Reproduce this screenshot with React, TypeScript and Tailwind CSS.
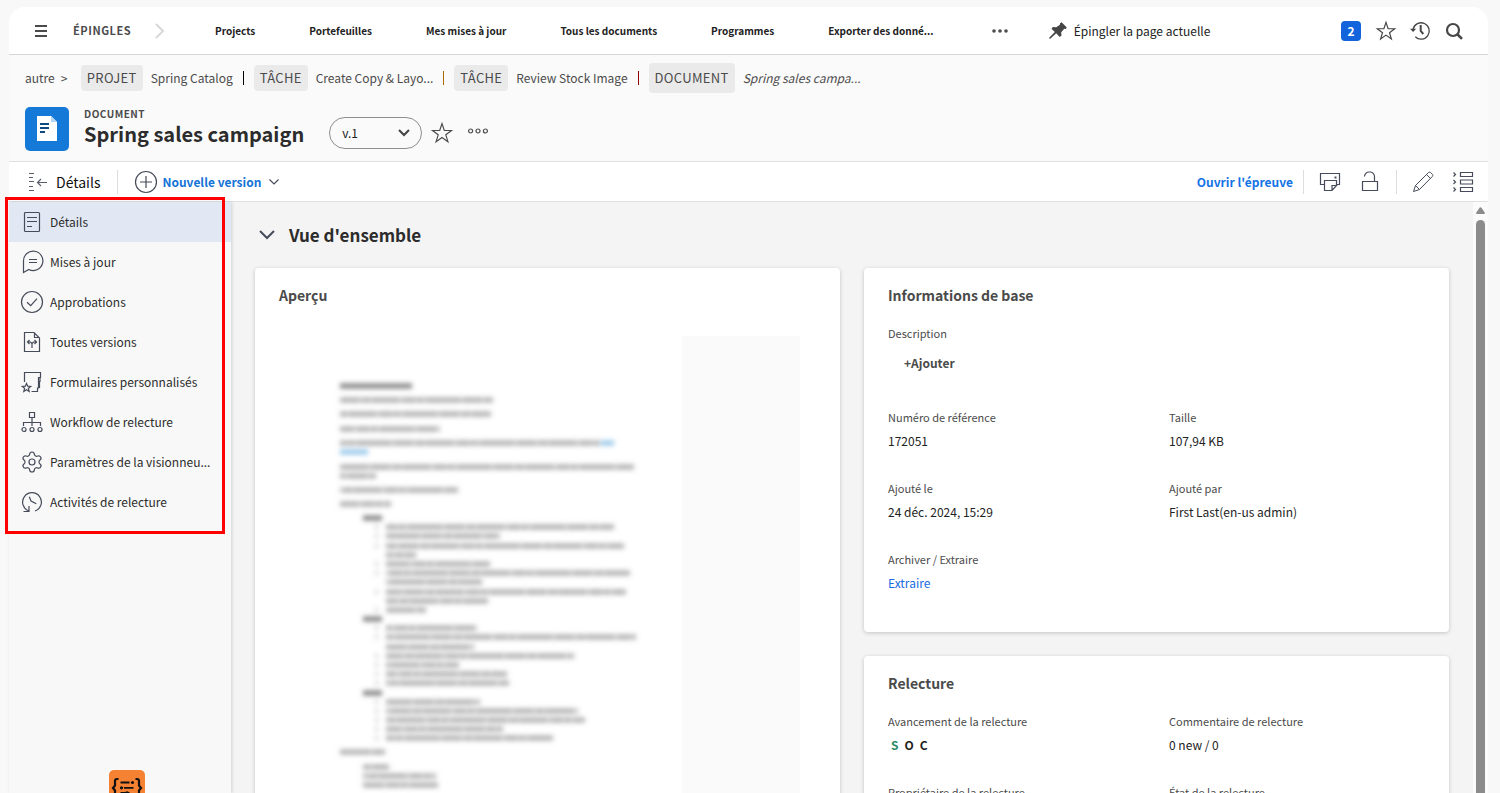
import React from "react";
import { Settings } from "lucide-react";

type IconProps = { children: React.ReactNode; className?: string };

function Icon({ children, className = "size-6" }: IconProps) {
  return (
    <svg
      viewBox="0 0 24 24"
      fill="none"
      stroke="currentColor"
      strokeWidth="1.2"
      aria-hidden="true"
      className={`shrink-0 ${className}`}
    >
      {children}
    </svg>
  );
}

const STAR = "M12 2.6l2.3 6.8 7.2.1-5.7 4.3 2.1 6.9-5.9-4.2-5.9 4.2 2.1-6.9L2.500 9.500l7.200-.1z";

const pins = [
  "Projects",
  "Portefeuilles",
  "Mes mises à jour",
  "Tous les documents",
  "Programmes",
  "Exporter des donné...",
];

function TopBar() {
  return (
    <header className="flex h-12 shrink-0 items-center rounded-t-2xl border-b border-[#d5d5d5] bg-white pl-5 pr-[22px]">
      <button aria-label="Menu principal" className="text-[#4b4b4b]">
        <Icon>
          <path d="M6 7h12M6 12h12M6 17h12" strokeWidth="2" />
        </Icon>
      </button>
      <span className="ml-5 w-16 whitespace-nowrap text-[11px] font-bold tracking-wider text-[#4b4b4b]">ÉPINGLES</span>
      <svg viewBox="0 0 10 16" className="ml-[18px] h-4 w-[10px]" fill="none" stroke="#d8d8d8" strokeWidth="2" aria-hidden="true">
        <path d="M1 1l7 7-7 7" />
      </svg>
      <nav className="ml-[50px] flex gap-[54px]">
        {pins.map((p) => (
          <a key={p} href="#" className="whitespace-nowrap text-[10px] font-bold text-[#222]">
            {p}
          </a>
        ))}
      </nav>
      <button aria-label="Plus d’épingles" className="ml-[58px] text-[#4b4b4b]">
        <svg viewBox="0 0 16 4" className="h-1 w-4" fill="currentColor" aria-hidden="true">
          <circle cx="2" cy="2" r="1.800" />
          <circle cx="8" cy="2" r="1.800" />
          <circle cx="14" cy="2" r="1.800" />
        </svg>
      </button>
      <button className="ml-10 flex items-center gap-1.5 whitespace-nowrap text-xs text-[#222]">
        <svg viewBox="0 0 20 20" className="size-5" fill="#464646" aria-hidden="true">
          <path d="M13.600 1.200l5.200 5.200-1 1.500-1.500-.1-3.100 3.400.3 3.200-1.800 1.500-3.500-3.600-5.900 5.400-1-.1-.1-.8L6.800 11 3.500 7.700l1.300-1.600 3.400.2L11.900 3.700l.2-1.500z" />
        </svg>
        Épingler la page actuelle
      </button>
      <div className="ml-auto flex items-center text-[#464646]">
        <button className="size-5 rounded bg-[#1164dc] text-xs font-bold leading-5 text-white">2</button>
        <button aria-label="Favoris" className="ml-[14px]">
          <Icon className="size-[22px]"><path d={STAR} strokeWidth="1.300" /></Icon>
        </button>
        <button aria-label="Récents" className="ml-[11px]">
          <Icon className="size-6">
            <path d="M5.100 10A8.200 8.200 0 1 1 7.300 17.800" strokeWidth="1.300" />
            <path d="M2 9.700h6.200l-3.100 3.200z" fill="currentColor" stroke="none" />
            <path d="M12.700 6v6l2.600 3" strokeWidth="2" />
          </Icon>
        </button>
        <button aria-label="Rechercher" className="ml-[10px]">
          <Icon className="size-6">
            <circle cx="11" cy="11" r="6" strokeWidth="2.200" />
            <path d="M15.300 15.300l4.700 4.600" strokeWidth="2.600" />
          </Icon>
        </button>
      </div>
    </header>
  );
}

const crumbs = [
  { kind: "PROJET", name: "Spring Catalog", sep: "border-black" },
  { kind: "TÂCHE", name: "Create Copy & Layo...", sep: "border-[#a86a00]" },
  { kind: "TÂCHE", name: "Review Stock Image", sep: "border-[#900000]" },
];

function PageHeader() {
  return (
    <section className="shrink-0 border-b border-[#e1e1e1] bg-[#fafafa] pb-[10px] pl-4 pt-2 text-[#4b4b4b]">
      <nav aria-label="Fil d’Ariane" className="flex h-[30px] items-center whitespace-nowrap text-xs">
        <a href="#">autre</a>
        <span className="ml-1.5 w-[14px]">&gt;</span>
        {crumbs.map((c) => (
          <div key={c.name} className="flex items-center">
            <span className="ml-1.5 mr-2 rounded bg-[#eaeaea] px-1.5 text-[13px] leading-[26px] tracking-wide">{c.kind}</span>
            <a href="#">{c.name}</a>
            <span className={`ml-[10px] mr-1 h-[14px] border-l ${c.sep}`} />
          </div>
        ))}
        <span className="ml-1.5 mr-2 rounded bg-[#eaeaea] px-1.5 text-[13px] leading-[30px] tracking-wide">DOCUMENT</span>
        <a href="#" className="italic">Spring sales campa...</a>
      </nav>
      <div className="mt-[14px] flex items-start">
        <svg viewBox="0 0 44 44" className="size-11" aria-hidden="true">
          <rect width="44" height="44" rx="5" fill="#1579d8" />
          <path d="M12 9h14l6 6v19H12z" fill="#fff" />
          <path d="M26 9l6 6h-6z" fill="#b5d7f5" />
          <path d="M15 17h9M15 21h9M15 25h5" stroke="#0c4a80" strokeWidth="2" />
        </svg>
        <div className="ml-[15px]">
          <p className="text-[10px] font-bold leading-[14px] tracking-wider">DOCUMENT</p>
          <h1 className="whitespace-nowrap text-xl font-bold leading-[26px] text-[#2c2c2c]">Spring sales campaign</h1>
        </div>
        <div className="relative ml-[25px] mt-[10px]">
          <select
            aria-label="Version"
            className="h-8 w-[93px] appearance-none rounded-full border border-[#8e8e8e] bg-transparent pl-3 text-xs text-[#222]"
          >
            <option>v.1</option>
          </select>
          <svg viewBox="0 0 12 8" className="pointer-events-none absolute right-3 top-3 h-2 w-3" fill="none" stroke="#444" strokeWidth="2" aria-hidden="true">
            <path d="M1 1l5 5 5-5" />
          </svg>
        </div>
        <button aria-label="Ajouter aux favoris" className="ml-2 mt-[14px]">
          <Icon><path d={STAR} /></Icon>
        </button>
        <button aria-label="Autres actions" className="ml-[14px] mt-[21px]">
          <svg viewBox="0 0 20 6" className="h-1.5 w-5" fill="none" stroke="currentColor" strokeWidth="1.200" aria-hidden="true">
            <circle cx="2.600" cy="3" r="2" />
            <circle cx="10" cy="3" r="2" />
            <circle cx="17.400" cy="3" r="2" />
          </svg>
        </button>
      </div>
    </section>
  );
}

function Toolbar() {
  return (
    <div className="flex h-10 shrink-0 items-center whitespace-nowrap border-b border-[#e1e1e1] bg-white pl-4 pr-[13px] text-[#464b59]">
      <button className="flex items-center gap-[7px] text-sm text-[#111]">
        <Icon className="size-6 text-[#5b5f6b]">
          <path d="M4 3.500h5M4 7.500h4M4 11.500h5M4 16.500h4M4 20.500h5" />
          <path d="M12.500 12.500h9.500M16 9l-3.500 3.500 3.500 3.500" />
        </Icon>
        Détails
      </button>
      <span className="ml-[17px] h-6 border-l border-[#dedede]" />
      <button className="ml-4 flex items-center text-xs font-bold text-[#1473d6]">
        <Icon className="size-6 text-[#464b59]">
          <circle cx="12" cy="12" r="10.500" />
          <path d="M12 6v12M6 12h12" />
        </Icon>
        <span className="ml-1 mr-2">Nouvelle version</span>
        <svg viewBox="0 0 10 6" className="h-1.5 w-[10px] text-[#464b59]" fill="none" stroke="currentColor" strokeWidth="1.200" aria-hidden="true">
          <path d="M.5.5L5 5 9.500.5" />
        </svg>
      </button>
      <div className="ml-auto flex items-center">
        <a href="#" className="text-xs font-bold text-[#1473e6]">Ouvrir l'épreuve</a>
        <span className="ml-[10px] h-6 border-l border-[#dedede]" />
        <button aria-label="Imprimer" className="ml-[14px]">
          <Icon>
            <path d="M6.500 14.500h-4v-11h19v11h-3" />
            <path d="M18.500 15.500v-5h-12v10h7.500l4.500-5h-4.500v5" />
            <path d="M17.500 6.500v2" strokeWidth="2" />
          </Icon>
        </button>
        <button aria-label="Déverrouiller" className="ml-4">
          <Icon>
            <path d="M4.500 11.500h15v9h-15zM16.500 11.500v-5a4.500 4.500 0 0 0-4.500-4.500h-1a4.500 4.500 0 0 0-4.500 4.500" />
          </Icon>
        </button>
        <span className="ml-[14px] h-6 border-l border-[#dedede]" />
        <button aria-label="Modifier" className="ml-[14px]">
          <Icon>
            <path strokeWidth="1" d="M2.500 21.500l2-6L17.500 2.500c.8-.6 1.700-.4 2.300.2l1.500 1.500c.6.6.8 1.500.1 2.200L8.500 19.500zM4.500 15.500l4 4M15.500 4.500l4 4" />
          </Icon>
        </button>
        <button aria-label="Afficher la liste" className="ml-4">
          <Icon>
            <path d="M9.500 2.500h12v4h-12zM9.500 10h12v4h-12zM9.500 17.500h12v4h-12z" />
            <path d="M2.500 2.500l2 2-2 2M2.500 10l2 2-2 2M2.500 17.500l2 2-2 2" />
          </Icon>
        </button>
      </div>
    </div>
  );
}

const menu: { label: string; icon: React.ReactNode }[] = [
  {
    label: "Détails",
    icon: <Icon><rect x="4.500" y="2.500" width="15" height="19" rx="1" /><path d="M7 7.500h10M7 11.500h10M7 16.500h5" /></Icon>,
  },
  {
    label: "Mises à jour",
    icon: <Icon><path d="M3.500 22.500V11a9.700 9.700 0 1 1 5.300 8.500zM9 9.500h8M9 12.500h8" /></Icon>,
  },
  {
    label: "Approbations",
    icon: <Icon><circle cx="12" cy="12" r="10.500" /><path d="M7 12.300l3.700 3.400 6.300-7" /></Icon>,
  },
  {
    label: "Toutes versions",
    icon: (
      <Icon>
        <path d="M4.500 2.500H14l5.500 5.500v13.500h-15zM14.500 2.500v5h5" />
        <path d="M12 18v-4.500L10.500 12H8M12 13.500l1.500-1.500H16M9.500 10l-2 2 2 2M14.500 10l2 2-2 2" />
      </Icon>
    ),
  },
  {
    label: "Formulaires personnalisés",
    icon: (
      <Icon>
        <path d="M4.500 12V2.500h16v5h-2v10.500H17.500v3.500h-6M20 8v3.500h-1.500M19.500 12v5.500H18" />
        <path d="M6.500 13.500l1.200 2.700 3 .2-2.300 1.900.8 3.200-2.700-1.700-2.700 1.700.8-3.200-2.300-1.900 3-.2z" />
      </Icon>
    ),
  },
  {
    label: "Workflow de relecture",
    icon: (
      <Icon>
        <path d="M9.500 2.500h5v5h-5zM12 7.500V16M3.500 16v-3.500h17V16" />
        <circle cx="4" cy="19.500" r="2" /><circle cx="12" cy="19.500" r="2" /><circle cx="20" cy="19.500" r="2" />
      </Icon>
    ),
  },
  {
    label: "Paramètres de la visionneu...",
    icon: <Settings className="size-6 shrink-0" strokeWidth={1.2} aria-hidden="true" />,
  },
  {
    label: "Activités de relecture",
    icon: (
      <Icon>
        <path d="M15 21a9.400 9.400 0 1 0-6 0M3.500 21.500h5.500V16M9.300 6.700L11 11l5.300 2.700" />
      </Icon>
    ),
  },
];

function Sidebar() {
  return (
    <aside className="relative z-10 w-[222px] shrink-0 bg-[#f8f8f8] shadow-[1px_0_3px_rgba(60,80,110,0.2)]">
      <ul>
        {menu.map((m, i) => (
          <li key={m.label}>
            <a
              href="#"
              className={`flex h-10 items-center gap-1.5 whitespace-nowrap pl-[11px] text-xs text-[#2c2c2c] ${i === 0 ? "bg-[#e1e8f4]" : ""}`}
            >
              <span className="text-[#464b59]">{m.icon}</span>
              {m.label}
            </a>
          </li>
        ))}
      </ul>
      <div className="pointer-events-none absolute -left-1 -top-[5px] h-[337px] w-[220px] border-[3px] border-[#f00]" />
      <button aria-label="Outils de développement" className="absolute -bottom-[13px] left-[100px]">
        <svg viewBox="0 0 36 36" className="size-9" aria-hidden="true">
          <rect width="36" height="36" rx="5" fill="#f58233" />
          <path d="M9.500 9H8q-2 0-2 2v4.500L4 18l2 2.500V25q0 2 2 2h1.500M26.500 9H28q2 0 2 2v4.500l2 2.500-2 2.500V25q0 2-2 2h-1.500" fill="none" stroke="#111" strokeWidth="2.200" />
          <path d="M11.500 12.500h9M15 17.800h9.500M11.500 23h9" stroke="#111" strokeWidth="1.800" />
          <g fill="#111"><circle cx="23.500" cy="12.500" r="1.600" /><circle cx="12.500" cy="17.800" r="1.600" /><circle cx="18" cy="23" r="1.800" /></g>
        </svg>
      </button>
    </aside>
  );
}

/* Text lines of the document thumbnail: [left, baseline, right] */
const lines: [number, number, number][] = [
  [61, 64, 214], [61, 78, 212], [61, 93, 161], [61, 107, 321], [61, 131, 355], [61, 140, 97],
  [61, 154, 179], [61, 168, 112], [107, 191, 335], [107, 200, 221], [107, 210, 345], [107, 219, 137],
  [107, 228, 211], [107, 237, 351], [107, 246, 203], [107, 256, 347], [107, 265, 209], [107, 274, 147],
  [107, 292, 198], [107, 301, 357], [107, 311, 195], [107, 320, 295], [107, 329, 180], [107, 338, 228],
  [107, 347, 230], [107, 366, 201], [107, 375, 299], [107, 384, 306], [107, 393, 224], [107, 402, 274],
  [61, 416, 106], [84, 431, 110], [84, 440, 157], [84, 449, 159],
];
const headings: [number, number, number][] = [[61, 50, 133], [84, 182, 103], [84, 283, 103], [84, 357, 103]];
const bulletRows = [191, 200, 210, 228, 237, 256, 274, 292, 301, 320, 329, 338, 347, 366, 375, 384, 393, 402];

function DocumentPreview() {
  return (
    <div className="flex h-[480px]">
      <svg viewBox="0 0 403 480" className="h-[480px] w-[403px] shrink-0" role="img" aria-label="Aperçu du document">
        <defs>
          <filter id="soft" x="-5%" y="-5%" width="110%" height="110%">
            <feGaussianBlur stdDeviation="2.400" />
          </filter>
        </defs>
        <g filter="url(#soft)" fill="none" strokeWidth="5">
          {lines.map(([x, y, r], i) => (
            <g key={i} stroke="#777">
              <path d={`M${x} ${y}H${r}`} strokeOpacity="0.42" />
              <path d={`M${x} ${y}H${r}`} strokeOpacity="0.28" strokeDasharray="19 3 8 2 27 4 12 2 6 3 34 3" strokeDashoffset={(i * 23) % 120} />
            </g>
          ))}
          {headings.map(([x, y, r]) => (
            <path key={y} d={`M${x} ${y}H${r}`} stroke="#555" strokeOpacity="0.75" />
          ))}
          <path d="M322 107h13M61 116h28" stroke="#6aaee0" strokeOpacity="0.7" />
          {bulletRows.map((y) => (
            <path key={y} d={`M96 ${y}h3`} stroke="#777" strokeOpacity="0.3" />
          ))}
        </g>
      </svg>
      <div className="w-[118px] bg-[#fafafa]" />
    </div>
  );
}

function Card({ title, children }: { title: string; children: React.ReactNode }) {
  return (
    <section className="rounded-sm bg-white px-6 pt-4 shadow-[0_1px_4px_rgba(0,0,0,0.2)]">
      <h3 className="text-sm font-bold leading-[23px] text-[#4b4b4b]">{title}</h3>
      {children}
    </section>
  );
}

function Field({ label, children }: { label: string; children?: React.ReactNode }) {
  return (
    <div className="h-[71px]">
      <dt className="text-[11px] leading-4 text-[#4b4b4b]">{label}</dt>
      <dd className="mt-1.5 text-xs leading-5 text-[#222]">{children}</dd>
    </div>
  );
}

function Content() {
  return (
    <main className="min-w-0 flex-1 overflow-hidden bg-[#f4f4f4] px-6">
      <h2 className="flex h-[66px] items-center gap-[14px] pl-1 text-[17px] font-bold text-[#2c2c2c]">
        <svg viewBox="0 0 16 10" className="h-[10px] w-4" fill="none" stroke="#464b59" strokeWidth="2" aria-hidden="true">
          <path d="M1 1l7 7 7-7" />
        </svg>
        Vue d'ensemble
      </h2>
      <div className="grid grid-cols-2 gap-6">
        <Card title="Aperçu">
          <div className="mt-[29px]">
            <DocumentPreview />
          </div>
        </Card>
        <div className="flex flex-col gap-6">
          <Card title="Informations de base">
            <dl className="mt-[18px] pb-[10px]">
              <div className="h-[84px]">
                <dt className="text-[11px] leading-4 text-[#4b4b4b]">Description</dt>
                <dd className="mt-2 pl-4">
                  <button className="text-xs font-bold leading-5 text-[#4b4b4b]">+Ajouter</button>
                </dd>
              </div>
              <div className="grid grid-cols-[281px_1fr]">
                <Field label="Numéro de référence">172051</Field>
                <Field label="Taille">107,94 KB</Field>
                <Field label="Ajouté le">24 déc. 2024, 15:29</Field>
                <Field label="Ajouté par">First Last(en-us admin)</Field>
                <Field label="Archiver / Extraire">
                  <a href="#" className="text-[#1a6be0]">Extraire</a>
                </Field>
              </div>
            </dl>
          </Card>
          <Card title="Relecture">
            <dl className="mt-[18px] grid grid-cols-[281px_1fr]">
              <Field label="Avancement de la relecture">
                <span className="flex gap-1.5 pl-[3px] font-bold">
                  <span className="text-[#2d8a63]">S</span>
                  <span>O</span>
                  <span>C</span>
                </span>
              </Field>
              <Field label="Commentaire de relecture">0 new / 0</Field>
              <Field label="Propriétaire de la relecture" />
              <Field label="État de la relecture" />
            </dl>
          </Card>
        </div>
      </div>
    </main>
  );
}

function Scrollbar() {
  return (
    <div className="flex w-[15px] shrink-0 flex-col items-center bg-[#fbfbfb] pt-[5px]" aria-hidden="true">
      <svg viewBox="0 0 9 7" className="h-[7px] w-[9px]" fill="#8b8b8b">
        <path d="M3.500.7q1-1 2 0L9 6q0 1-1 1H1Q0 7 0 6z" />
      </svg>
      <div className="mt-1.5 w-[9px] flex-1 rounded-t-full bg-[#8b8b8b]" />
    </div>
  );
}

export default function App() {
  return (
    <div className="flex h-screen flex-col overflow-hidden bg-[#f8f8f8] pl-[9px] pr-3 pt-[7px] font-['Noto_Sans_CJK_SC','Noto_Sans',sans-serif]">
      <TopBar />
      <PageHeader />
      <Toolbar />
      <div className="flex min-h-0 flex-1">
        <Sidebar />
        <Content />
        <Scrollbar />
      </div>
    </div>
  );
}
